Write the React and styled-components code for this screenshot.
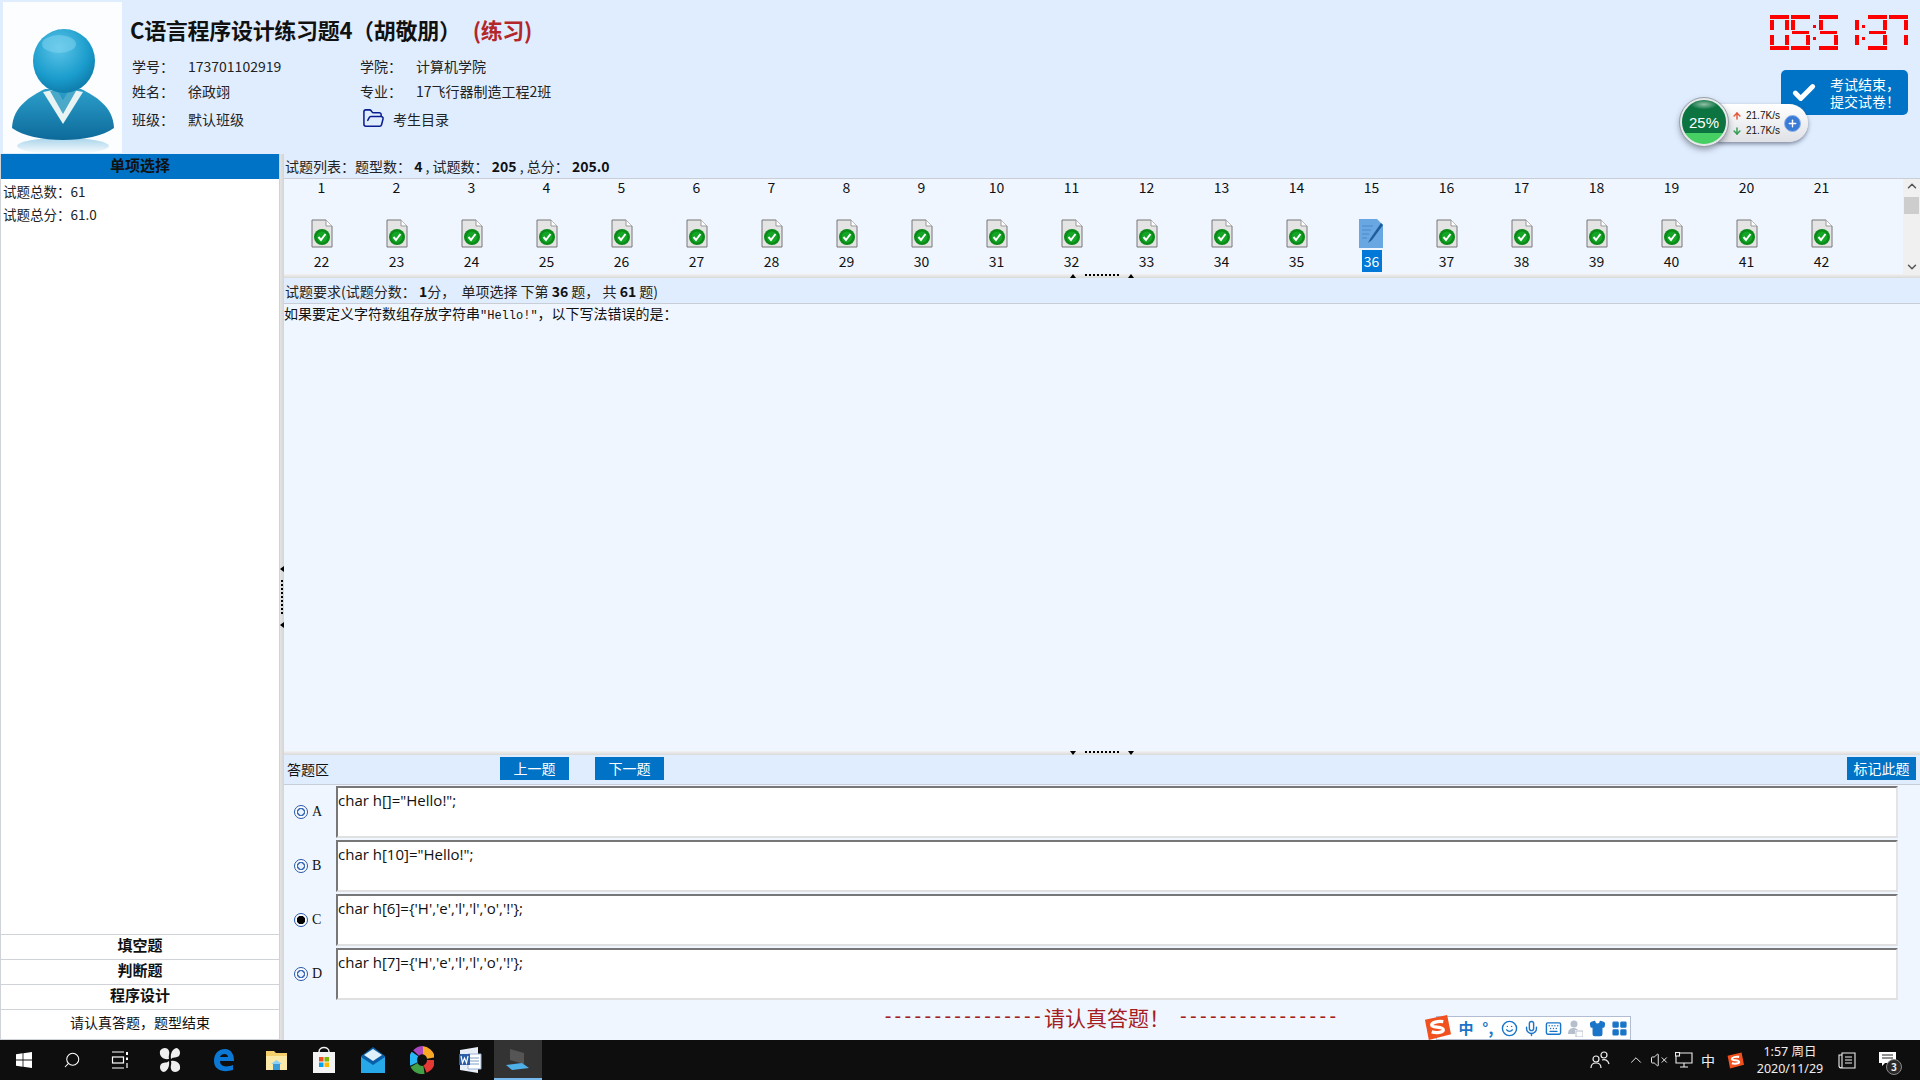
import React from "react";
import styled, { createGlobalStyle } from "styled-components";
import {
  Check,
  ChevronDown,
  ChevronUp,
  FolderOpen,
  Search,
  Smile,
  Mic,
  Keyboard,
  Shirt,
  LayoutGrid,
  VolumeX,
  Plus,
  ArrowUp,
  ArrowDown,
} from "lucide-react";

const CJK = `"Noto Sans CJK SC", "Noto Sans", sans-serif`;

const GlobalStyle = createGlobalStyle`
  html, body {
    margin: 0;
    padding: 0;
    width: 1920px;
    height: 1080px;
    overflow: hidden;
    font-family: ${CJK};
    font-size: 14px;
    color: #111;
  }
  * { box-sizing: border-box; }
`;

const Page = styled.div`
  position: relative;
  width: 1920px;
  height: 1080px;
  display: grid;
  grid-template-rows: 154px 886px 40px;
  background: #e0edff;
`;

/* header */
const Header = styled.header`
  display: flex;
  background: #e0edff;
`;

const AvatarBox = styled.div`
  width: 119px;
  height: 151px;
  margin: 2px 0 0 3px;
  background: #fbfdff;
`;

const Info = styled.div`
  margin-left: 8px;
  padding-top: 12px;
  flex: 1;
`;

const Title = styled.h1`
  margin: 0;
  height: 34px;
  font-size: 22px;
  line-height: 34px;
  font-weight: 700;
  letter-spacing: -0.3px;
  color: #111;
  span {
    margin-left: 12px;
    color: #b3262a;
  }
`;

const Facts = styled.div`
  display: grid;
  grid-template-columns: 56px 172px 56px 1fr;
  grid-template-rows: 25px 25px 31px;
  margin: 7px 0 0 2px;
  align-items: center;
  line-height: 20px;
  color: #222;
`;

const DirLink = styled.div`
  grid-column: 3 / 5;
  display: flex;
  align-items: center;
  gap: 8px;
  margin-left: 2px;
  svg { color: #0a1f8f; }
`;

const HeaderRight = styled.div`
  width: 150px;
  padding: 15px 12px 0 0;
  display: flex;
  flex-direction: column;
  align-items: flex-end;
`;

const Clock = styled.div`
  display: flex;
  height: 35px;
`;

const Digit = styled.div`
  width: 19px;
  height: 35px;
  display: grid;
  grid-template-columns: 4px 1fr 4px;
  grid-template-rows: 4px 1fr 3px 1fr 4px;
  margin-left: ${(p) => (p.$tight ? 0 : 2)}px;
`;

const Segment = styled.i`
  background: #ff0000;
  grid-area: ${(p) => p.$area};
  margin: ${(p) => p.$inset || 0};
`;

const ClockColon = styled.div`
  width: 9px;
  display: flex;
  flex-direction: column;
  align-items: center;
  justify-content: center;
  gap: 9px;
  i {
    width: 3px;
    height: 3px;
    background: #ff0000;
  }
`;

const SubmitButton = styled.button`
  width: 127px;
  height: 45px;
  margin-top: 20px;
  border: 0;
  border-radius: 5px;
  background: #0073c6;
  color: #fff;
  display: flex;
  align-items: center;
  padding: 0 0 0 10px;
  font-family: ${CJK};
  font-size: 14px;
  line-height: 17px;
  text-align: left;
  svg { flex: none; }
  span { margin-left: 13px; }
`;

/* floating net speed widget */
const NetWidget = styled.div`
  position: absolute;
  left: 1680px;
  top: 98px;
  width: 128px;
  height: 48px;
  z-index: 3;
`;

const NetPill = styled.div`
  position: absolute;
  left: 24px;
  top: 6px;
  width: 104px;
  height: 38px;
  border-radius: 19px;
  background: linear-gradient(#ffffff, #dfe1e6);
  box-shadow: 0 2px 4px rgba(60, 70, 90, 0.6);
  display: flex;
  align-items: center;
  padding-left: 28px;
`;

const NetRates = styled.div`
  display: grid;
  grid-template-columns: 14px auto;
  row-gap: 2px;
  align-items: center;
  font-family: "Liberation Sans", sans-serif;
  font-size: 10px;
  line-height: 13px;
  color: #111;
`;

const NetPlus = styled.div`
  width: 17px;
  height: 17px;
  margin-left: 4px;
  border-radius: 50%;
  background: #3a7bd5;
  border: 1px solid #8fb4e8;
  color: #fff;
  display: flex;
  align-items: center;
  justify-content: center;
`;

const NetBall = styled.div`
  position: absolute;
  left: 0;
  top: 0;
  width: 48px;
  height: 48px;
  border-radius: 50%;
  border: 2px solid #e6e8ea;
  outline: 1px solid #9aa3a8;
  background: radial-gradient(ellipse 14px 5px at 50% 10%, rgba(255, 255, 255, 0.55), transparent),
    linear-gradient(#0b7440 0 75%, #46cf62 75%);
  box-shadow: 0 3px 6px rgba(40, 50, 60, 0.5);
  color: #fff;
  font-family: "Liberation Sans", sans-serif;
  font-size: 15px;
  display: flex;
  align-items: center;
  justify-content: center;
`;

/* body */
const Body = styled.div`
  display: flex;
  min-height: 0;
`;

const LeftPanel = styled.aside`
  width: 280px;
  display: flex;
  flex-direction: column;
  background: #fff;
  border: 1px solid #cfd3d8;
  border-top: 0;
`;

const LeftHead = styled.div`
  height: 25px;
  background: #0073c6;
  text-align: center;
  font-weight: 700;
  font-size: 15px;
  line-height: 21px;
  color: #111;
`;

const LeftStats = styled.div`
  flex: 1;
  padding: 1px 0 0 2px;
  font-size: 13.5px;
  line-height: 23px;
  color: #222;
`;

const LeftRow = styled.div`
  height: ${(p) => (p.$end ? 30 : 25)}px;
  border-top: 1px solid #cfd3d8;
  text-align: center;
  font-weight: ${(p) => (p.$end ? 400 : 700)};
  line-height: ${(p) => (p.$end ? 25 : 19)}px;
  font-size: ${(p) => (p.$end ? 14 : 15)}px;
`;

const Splitter = styled.div`
  flex: none;
  display: flex;
  align-items: center;
  justify-content: center;
  background: ${(p) =>
    p.$vertical
      ? "linear-gradient(90deg, #e4e4e4, #d4d4d4)"
      : "linear-gradient(#f2f2f2, #d9d9d9)"};
  width: ${(p) => (p.$vertical ? "4px" : "auto")};
  height: ${(p) => (p.$vertical ? "auto" : "4px")};
  flex-direction: ${(p) => (p.$vertical ? "column" : "row")};
  gap: ${(p) => (p.$vertical ? 8 : 9)}px;
`;

const SplitDots = styled.i`
  width: ${(p) => (p.$vertical ? 0 : 34)}px;
  height: ${(p) => (p.$vertical ? 34 : 0)}px;
  border-left: ${(p) => (p.$vertical ? "2px dotted #000" : 0)};
  border-top: ${(p) => (p.$vertical ? 0 : "2px dotted #000")};
  margin-top: ${(p) => (p.$vertical ? 0 : -2)}px;
`;

const SplitArrow = styled.i`
  width: 0;
  height: 0;
  border: 3px solid transparent;
  ${(p) =>
    p.$dir === "up"
      ? "border-bottom: 4px solid #000; border-top: 0;"
      : p.$dir === "down"
      ? "border-top: 4px solid #000; border-bottom: 0;"
      : "border-right: 4px solid #000; border-left: 0;"}
`;

const RightPanel = styled.main`
  flex: 1;
  min-width: 0;
  display: flex;
  flex-direction: column;
  background: #eff6ff;
`;

const BarRow = styled.div`
  height: ${(p) => p.$h}px;
  flex: none;
  background: #e0edff;
  border-bottom: 1px solid #c9ced6;
  display: flex;
  align-items: center;
  padding-left: 1px;
  font-size: 14px;
  color: #222;
  white-space: pre;
  b { color: #111; font-weight: 700; }
`;

const QuestionGrid = styled.div`
  height: 95px;
  flex: none;
  display: flex;
  justify-content: space-between;
  background: #eff6ff;
`;

const Cells = styled.div`
  display: grid;
  grid-template-columns: repeat(21, 75px);
  grid-template-rows: 15px 25px 29px 26px;
  justify-items: center;
  align-items: center;
`;

const CellNumber = styled.div`
  min-width: 20px;
  height: 22px;
  line-height: 22px;
  text-align: center;
  font-size: 14px;
  background: ${(p) => (p.$on ? "#0078d7" : "transparent")};
  color: ${(p) => (p.$on ? "#fff" : "#111")};
`;

const CellIcon = styled.div`
  grid-row: 3;
  height: 29px;
`;

const Spacer = styled.div`
  grid-column: 1 / -1;
`;

const ScrollBar = styled.div`
  width: 17px;
  background: #f0f0f0;
  display: flex;
  flex-direction: column;
  align-items: center;
  color: #555;
`;

const ScrollThumb = styled.div`
  width: 15px;
  height: 17px;
  margin-top: 4px;
  margin-bottom: auto;
  background: #cdcdcd;
`;

const QuestionText = styled.div`
  flex: 1;
  line-height: 18px;
  font-size: 14px;
  color: #111;
  span { font-family: "Liberation Mono", monospace; font-size: 12px; }
`;

const AnswerBar = styled.div`
  height: 30px;
  flex: none;
  background: #e0edff;
  border-bottom: 1px solid #c9ced6;
  display: flex;
  align-items: center;
  padding: 0 4px 2px 3px;
  font-size: 14px;
`;

const BlueButton = styled.button`
  width: 69px;
  height: 23px;
  margin-left: ${(p) => p.$ml};
  border: 0;
  padding: 0;
  background: #0073c6;
  color: #fff;
  font-family: ${CJK};
  font-size: 14px;
  line-height: 23px;
`;

const Options = styled.div`
  display: flex;
  flex-direction: column;
  gap: 2px;
  padding: 1px 22px 0 0;
`;

const OptionRow = styled.label`
  display: flex;
  height: 52px;
`;

const OptionPick = styled.div`
  width: 52px;
  flex: none;
  display: flex;
  align-items: center;
  padding: 0 0 0 10px;
  gap: 4px;
  font-family: "Liberation Serif", serif;
  font-size: 14px;
`;

const Radio = styled.i`
  width: 14px;
  height: 14px;
  border-radius: 50%;
  border: 1px solid #2456a8;
  background: ${(p) =>
    p.$checked
      ? "radial-gradient(circle, #000 0 4px, #fff 4.5px)"
      : "radial-gradient(circle, #eaf2ff 0 2.5px, #3b6cb8 3px 4px, #fff 4.5px)"};
`;

const OptionBox = styled.div`
  flex: 1;
  background: #fff;
  border-style: solid;
  border-width: 2px;
  border-color: #777 #e4e4e4 #e0e0e0 #777;
  padding: 0;
  font-family: "Open Sans", sans-serif;
  font-size: 15px;
  line-height: 24px;
  color: #111;
`;

const Notice = styled.div`
  height: 40px;
  flex: none;
  display: flex;
  align-items: center;
  justify-content: center;
  padding: 0 0 7px 20px;
  color: #a51d22;
  font-size: 21px;
`;

const Dashes = styled.span`
  font-family: "Liberation Sans", sans-serif;
  font-size: 20px;
  letter-spacing: 3.3px;
  margin-left: ${(p) => p.$ml || 0}px;
`;

/* ime bar */
const ImeBar = styled.div`
  position: absolute;
  left: 1436px;
  top: 1016px;
  width: 195px;
  height: 24px;
  background: #fff;
  border: 1px solid #b2bdd1;
  display: flex;
  align-items: center;
  padding-left: 18px;
  color: #1a74c8;
  z-index: 4;
`;

const ImeSlot = styled.span`
  width: 22px;
  display: flex;
  justify-content: center;
  font-size: 15px;
  font-weight: 700;
  line-height: 20px;
`;

const ImeLogo = styled.div`
  position: absolute;
  left: 1424px;
  top: 1014px;
  z-index: 5;
`;

/* taskbar */
const Taskbar = styled.footer`
  background: #0e0e0e;
  display: flex;
  align-items: center;
  color: #fff;
`;

const TaskSlot = styled.div`
  width: ${(p) => p.$w || 48}px;
  height: 40px;
  flex: none;
  display: flex;
  align-items: center;
  justify-content: center;
  ${(p) => p.$active && "background: #333; border-bottom: 2px solid #76b9ed;"}
`;

const Tray = styled.div`
  margin-left: auto;
  padding-right: 10px;
  display: flex;
  align-items: center;
  height: 40px;
`;

const TraySlot = styled.div`
  width: ${(p) => p.$w}px;
  height: 40px;
  flex: none;
  display: flex;
  align-items: center;
  justify-content: center;
  margin-left: ${(p) => p.$ml || 0}px;
  font-size: 14px;
  color: #eee;
`;

const TrayClock = styled.div`
  width: 80px;
  text-align: center;
  font-family: "Noto Sans", ${CJK};
  font-size: 12.5px;
  line-height: 17px;
  color: #eee;
`;

const TrayBadge = styled.i`
  position: absolute;
  right: 8px;
  bottom: 5px;
  width: 16px;
  height: 16px;
  border-radius: 50%;
  background: #2a2a2a;
  border: 1px solid #888;
  font-style: normal;
  font-size: 10px;
  line-height: 14px;
  text-align: center;
  font-weight: 700;
`;

const TrayMsg = styled(TraySlot)`
  position: relative;
`;

const SEGMENTS = {
  0: "abcdef",
  1: "bc",
  3: "abcdg",
  5: "acdfg",
  7: "abc",
};

const SEG_AREA = {
  a: "1 / 1 / 2 / 4",
  b: "2 / 3 / 3 / 4",
  c: "4 / 3 / 5 / 4",
  d: "5 / 1 / 6 / 4",
  e: "4 / 1 / 5 / 2",
  f: "2 / 1 / 3 / 2",
  g: "3 / 1 / 4 / 4",
};

const LedDigit = ({ value, tight }) => (
  <Digit $tight={tight}>
    {SEGMENTS[value].split("").map((s) => (
      <Segment
        key={s}
        $area={SEG_AREA[s]}
        $inset={"bcef".includes(s) ? "1px 0" : s === "g" ? "0 1px" : 0}
      />
    ))}
  </Digit>
);

const Colon = () => (
  <ClockColon>
    <i />
    <i />
  </ClockColon>
);

const Avatar = () => (
  <svg width="119" height="151" viewBox="0 0 119 151">
    <defs>
      <radialGradient id="head" cx="0.42" cy="0.3" r="0.8">
        <stop offset="0" stopColor="#5cc4e8" />
        <stop offset="0.6" stopColor="#1a9ccc" />
        <stop offset="1" stopColor="#0a6f9e" />
      </radialGradient>
      <linearGradient id="torso" x1="0" y1="0" x2="0" y2="1">
        <stop offset="0" stopColor="#2c9fcb" />
        <stop offset="1" stopColor="#0d6a9a" />
      </linearGradient>
      <linearGradient id="glow" x1="0" y1="0" x2="0" y2="1">
        <stop offset="0" stopColor="#a8d4ea" />
        <stop offset="1" stopColor="#fbfdff" />
      </linearGradient>
    </defs>
    <ellipse cx="60" cy="144" rx="46" ry="8" fill="url(#glow)" />
    <path d="M9 126C10 104 28 94 42 87L78 87C92 94 110 104 111 126C90 142 30 142 9 126Z" fill="url(#torso)" />
    <path d="M40 90L60 122L80 90L70 88L60 104L50 88Z" fill="#e8f3f4" />
    <path d="M47 89L60 112L73 89L66 88L60 98L54 88Z" fill="#4aa8c8" />
    <ellipse cx="61" cy="59" rx="31" ry="32" fill="url(#head)" />
    <ellipse cx="56" cy="42" rx="17" ry="9" fill="#7fd4ee" opacity="0.55" />
  </svg>
);

const DoneFile = () => (
  <svg width="22" height="29" viewBox="0 0 22 29">
    <path d="M1 1H15L21 7V28H1Z" fill="#e4e4e4" stroke="#777" />
    <path d="M15 1V7H21" fill="#fff" stroke="#999" />
    <circle cx="11" cy="18" r="8" fill="#0b8a18" />
    <circle cx="11" cy="18" r="5.5" fill="#12a526" />
    <path d="M7.5 18L10 21L14.5 15" fill="none" stroke="#fff" strokeWidth="2" />
  </svg>
);

const EditFile = () => (
  <svg width="25" height="30" viewBox="0 0 25 30">
    <path d="M0 0H18L24 6V29H0Z" fill="#69a7e2" />
    <path d="M3 7H14M3 11H12M3 15H10M3 19H8" stroke="#4a89c6" />
    <path d="M22 4L11 20L9 24L13 21L24 6Z" fill="#1d5d9e" />
  </svg>
);

const WinLogo = () => (
  <svg width="16" height="16" viewBox="0 0 16 16" fill="#fff">
    <path d="M0 2.2L6.6 1.3V7.6H0ZM7.4 1.2L16 0V7.6H7.4ZM0 8.4H6.6V14.7L0 13.8ZM7.4 8.4H16V16L7.4 14.8Z" />
  </svg>
);

const TaskView = () => (
  <svg width="18" height="18" viewBox="0 0 18 18" fill="none" stroke="#fff" strokeWidth="1.2">
    <path d="M1 1H13M1 17H13" />
    <rect x="1.5" y="6" width="11" height="6" />
    <path d="M16 1V4M16 6.5V9" strokeWidth="2" />
    <path d="M16 12V17" />
  </svg>
);

const Pinwheel = () => (
  <svg width="22" height="26" viewBox="0 0 22 26" fill="#eee">
    <path d="M10 12C4 13 0 9 1 4C3 0 9 0 10 4C11 7 9 9 10 12Z" />
    <path d="M12 12C11 6 14 1 18 1C22 3 22 9 18 10C15 11 14 10 12 12Z" />
    <path d="M12 14C18 13 22 17 21 22C19 26 13 26 12 22C11 19 13 17 12 14Z" />
    <path d="M10 14C11 20 8 25 4 25C0 23 0 17 4 16C7 15 8 16 10 14Z" />
  </svg>
);

const EdgeIcon = () => (
  <svg width="22" height="24" viewBox="0 0 22 24">
    <path d="M1 13C1 5 6 1 12 1C18 1 21 6 21 13H7C7 18 12 20 20 17V22C10 25 1 22 1 13ZM7 9H15C15 5 8 5 7 9Z" fill="#0b78d6" />
  </svg>
);

const FolderIcon = () => (
  <svg width="23" height="23" viewBox="0 0 23 23">
    <path d="M1 2H9L11 4H22V21H1Z" fill="#f4d06c" />
    <path d="M1 7H22V21H1Z" fill="#fbe9a8" />
    <path d="M8 15H15V21H8Z" fill="#3a9bdc" />
    <path d="M6 15L11.5 11L17 15Z" fill="#8ed0f5" />
  </svg>
);

const StoreIcon = () => (
  <svg width="24" height="28" viewBox="0 0 24 28">
    <path d="M7 6C7 0 17 0 17 6" fill="none" stroke="#eee" strokeWidth="1.5" />
    <rect x="1" y="6" width="22" height="21" fill="#f3f3f3" />
    <rect x="7" y="11" width="4.5" height="4.5" fill="#f25022" />
    <rect x="12.5" y="11" width="4.5" height="4.5" fill="#7fba00" />
    <rect x="7" y="16.5" width="4.5" height="4.5" fill="#00a4ef" />
    <rect x="12.5" y="16.5" width="4.5" height="4.5" fill="#ffb900" />
  </svg>
);

const MailIcon = () => (
  <svg width="24" height="26" viewBox="0 0 24 26">
    <path d="M0 9L12 0L24 9V26H0Z" fill="#0a5fa8" />
    <path d="M0 10L12 18L24 10V26H0Z" fill="#27a8e8" />
    <path d="M3 8L12 2L21 8L12 14Z" fill="#dff1fb" />
  </svg>
);

const ColorWheel = () => (
  <svg width="24" height="28" viewBox="0 0 24 28" fill="none" strokeWidth="8">
    <path d="M12 4A10 10 0 0 1 21 12" stroke="#f9a825" />
    <path d="M21 14A10 10 0 0 1 15 23" stroke="#e53935" />
    <path d="M14 24A10 10 0 0 1 4 19" stroke="#43a047" />
    <path d="M4 18A10 10 0 0 1 5 8" stroke="#29b6f6" />
    <path d="M6 7A10 10 0 0 1 13 4" stroke="#ab47bc" />
  </svg>
);

const WordIcon = () => (
  <svg width="24" height="26" viewBox="0 0 24 26">
    <path d="M2 3L20 0V26L2 23Z" fill="#e8eef7" />
    <path d="M10 7H23V22H10Z" fill="#fff" stroke="#9bb3d4" />
    <path d="M12 11H21M12 14H21M12 17H21" stroke="#7d9cc6" />
    <rect x="1" y="7" width="11" height="11" fill="#2a5ea8" />
    <path d="M3 9L4.5 16L6.5 11L8.5 16L10 9" fill="none" stroke="#fff" strokeWidth="1.2" />
  </svg>
);

const ExamIcon = () => (
  <svg width="24" height="24" viewBox="0 0 24 24">
    <path d="M4 2L18 6V17L4 13Z" fill="#555" />
    <path d="M0 18L16 16L23 21L6 23Z" fill="#4fb0e8" />
  </svg>
);

const SogouMark = ({ size }) => (
  <svg width={size} height={size} viewBox="0 0 28 28">
    <path d="M1 6L24 1L28 21L5 27Z" fill="#f0511e" />
    <path d="M20 8C14 7 8 9 8 11.5C8 15 20 12 20 16.5C20 19 13 20 8 18.5" fill="none" stroke="#fff" strokeWidth="3.4" />
  </svg>
);

const PeopleIcon = () => (
  <svg width="20" height="18" viewBox="0 0 20 18" fill="none" stroke="#eee" strokeWidth="1.2">
    <circle cx="6" cy="8" r="3" />
    <path d="M1 17C1 13 3 12 6 12C9 12 11 13 11 17" />
    <circle cx="14" cy="4" r="3" />
    <path d="M12 9C15 8 18 9 19 13" />
  </svg>
);

const NetIcon = () => (
  <svg width="18" height="16" viewBox="0 0 18 16" fill="none" stroke="#eee" strokeWidth="1.1">
    <path d="M4 1H17V11H1V4" />
    <rect x="0.5" y="0.5" width="4" height="3.5" />
    <path d="M9 11V15M5 15H13" />
  </svg>
);

const NotesIcon = () => (
  <svg width="18" height="17" viewBox="0 0 18 17" fill="none" stroke="#eee" strokeWidth="1.1">
    <path d="M4 1H17V16H4ZM4 3H1V14C1 15.5 2.5 16 4 16" />
    <path d="M7 5H14M7 8H14M7 11H14" />
  </svg>
);

const MsgIcon = () => (
  <svg width="18" height="16" viewBox="0 0 18 16" fill="#fff">
    <path d="M0 0H17V11H6L3 14V11H0Z" />
    <path d="M3 3H14M3 6H14" stroke="#222" />
  </svg>
);

const PersonCard = () => (
  <svg width="16" height="17" viewBox="0 0 16 17" fill="#b6c0cc">
    <circle cx="7" cy="4" r="3.5" />
    <path d="M1 14C1 9 4 8 7 8C9 8 10 9 11 10H8V14Z" />
    <rect x="9" y="11" width="7" height="6" fill="#fff" stroke="#b6c0cc" />
  </svg>
);

const range = (from, to) =>
  Array.from({ length: to - from + 1 }, (_, i) => from + i);

const OPTIONS = [
  { key: "A", code: 'char h[]="Hello!";' },
  { key: "B", code: 'char h[10]="Hello!";' },
  { key: "C", code: "char h[6]={'H','e','l','l','o','!'};", checked: true },
  { key: "D", code: "char h[7]={'H','e','l','l','o','!'};" },
];

const App = () => {
  return (
    <Page>
      <GlobalStyle />
      <Header>
        <AvatarBox>
          <Avatar />
        </AvatarBox>
        <Info>
          <Title>
            C语言程序设计练习题4（胡敬朋）<span>(练习)</span>
          </Title>
          <Facts>
            <div>学号：</div>
            <div>173701102919</div>
            <div>学院：</div>
            <div>计算机学院</div>
            <div>姓名：</div>
            <div>徐政翊</div>
            <div>专业：</div>
            <div>17飞行器制造工程2班</div>
            <div>班级：</div>
            <div>默认班级</div>
            <DirLink>
              <FolderOpen size={23} strokeWidth={1.6} />
              考生目录
            </DirLink>
          </Facts>
        </Info>
        <HeaderRight>
          <Clock role="timer" aria-label="05:51:37">
            <LedDigit value={0} tight />
            <LedDigit value={5} />
            <Colon />
            <LedDigit value={5} tight />
            <LedDigit value={1} />
            <Colon />
            <LedDigit value={3} tight />
            <LedDigit value={7} />
          </Clock>
          <SubmitButton>
            <Check size={26} strokeWidth={4.5} />
            <span>
              考试结束，
              <br />
              提交试卷！
            </span>
          </SubmitButton>
        </HeaderRight>
      </Header>

      <NetWidget>
        <NetPill>
          <NetRates>
            <ArrowUp size={10} color="#e4593c" strokeWidth={3.5} />
            <span>21.7K/s</span>
            <ArrowDown size={10} color="#2c9a4c" strokeWidth={3.5} />
            <span>21.7K/s</span>
          </NetRates>
          <NetPlus>
            <Plus size={11} strokeWidth={3} />
          </NetPlus>
        </NetPill>
        <NetBall>25%</NetBall>
      </NetWidget>

      <Body>
        <LeftPanel>
          <LeftHead>单项选择</LeftHead>
          <LeftStats>
            <div>试题总数：61</div>
            <div>试题总分：61.0</div>
          </LeftStats>
          <LeftRow>填空题</LeftRow>
          <LeftRow>判断题</LeftRow>
          <LeftRow>程序设计</LeftRow>
          <LeftRow $end>请认真答题，题型结束</LeftRow>
        </LeftPanel>

        <Splitter $vertical>
          <SplitArrow />
          <SplitDots $vertical />
          <SplitArrow />
        </Splitter>

        <RightPanel>
          <BarRow $h={25}>
            试题列表：题型数：<b> 4</b> , 试题数：<b> 205</b> , 总分：<b> 205.0</b>
          </BarRow>
          <QuestionGrid>
            <Cells>
              {range(1, 21).map((n) => (
                <CellNumber key={n}>{n}</CellNumber>
              ))}
              <Spacer />
              {range(22, 42).map((n) => (
                <CellIcon key={n}>{n === 36 ? <EditFile /> : <DoneFile />}</CellIcon>
              ))}
              {range(22, 42).map((n) => (
                <CellNumber key={n} $on={n === 36}>
                  {n}
                </CellNumber>
              ))}
            </Cells>
            <ScrollBar>
              <ChevronUp size={14} strokeWidth={2.5} />
              <ScrollThumb />
              <ChevronDown size={14} strokeWidth={2.5} />
            </ScrollBar>
          </QuestionGrid>
          <Splitter>
            <SplitArrow $dir="up" />
            <SplitDots />
            <SplitArrow $dir="up" />
          </Splitter>
          <BarRow $h={26}>
            试题要求(试题分数： <b>1</b>分，  单项选择 下第 <b>36</b> 题， 共 <b>61</b> 题)
          </BarRow>
          <QuestionText>
            如果要定义字符数组存放字符串<span>"Hello!"</span>，以下写法错误的是：
          </QuestionText>
          <Splitter>
            <SplitArrow $dir="down" />
            <SplitDots />
            <SplitArrow $dir="down" />
          </Splitter>
          <AnswerBar>
            答题区
            <BlueButton $ml="171px">上一题</BlueButton>
            <BlueButton $ml="26px">下一题</BlueButton>
            <BlueButton $ml="auto">标记此题</BlueButton>
          </AnswerBar>
          <Options>
            {OPTIONS.map((o) => (
              <OptionRow key={o.key}>
                <OptionPick>
                  <Radio $checked={o.checked} />
                  {o.key}
                </OptionPick>
                <OptionBox>{o.code}</OptionBox>
              </OptionRow>
            ))}
          </Options>
          <Notice>
            <Dashes>----------------</Dashes>
            请认真答题！
            <Dashes $ml={10}>----------------</Dashes>
          </Notice>
        </RightPanel>
      </Body>

      <ImeLogo>
        <SogouMark size={27} />
      </ImeLogo>
      <ImeBar>
        <ImeSlot>中</ImeSlot>
        <ImeSlot>°,</ImeSlot>
        <ImeSlot>
          <Smile size={17} />
        </ImeSlot>
        <ImeSlot>
          <Mic size={17} />
        </ImeSlot>
        <ImeSlot>
          <Keyboard size={17} />
        </ImeSlot>
        <ImeSlot>
          <PersonCard />
        </ImeSlot>
        <ImeSlot>
          <Shirt size={17} fill="#1a74c8" />
        </ImeSlot>
        <ImeSlot>
          <LayoutGrid size={17} fill="#1a74c8" />
        </ImeSlot>
      </ImeBar>

      <Taskbar>
        <TaskSlot>
          <WinLogo />
        </TaskSlot>
        <TaskSlot>
          <Search size={18} strokeWidth={1.4} style={{ transform: "scaleX(-1)" }} />
        </TaskSlot>
        <TaskSlot>
          <TaskView />
        </TaskSlot>
        <TaskSlot $w={52}>
          <Pinwheel />
        </TaskSlot>
        <TaskSlot $w={56}>
          <EdgeIcon />
        </TaskSlot>
        <TaskSlot>
          <FolderIcon />
        </TaskSlot>
        <TaskSlot>
          <StoreIcon />
        </TaskSlot>
        <TaskSlot $w={50}>
          <MailIcon />
        </TaskSlot>
        <TaskSlot>
          <ColorWheel />
        </TaskSlot>
        <TaskSlot>
          <WordIcon />
        </TaskSlot>
        <TaskSlot $active>
          <ExamIcon />
        </TaskSlot>
        <Tray>
          <TraySlot $w={30}>
            <PeopleIcon />
          </TraySlot>
          <TraySlot $w={20} $ml={11}>
            <ChevronUp size={18} strokeWidth={1.3} />
          </TraySlot>
          <TraySlot $w={26}>
            <VolumeX size={18} strokeWidth={1.3} />
          </TraySlot>
          <TraySlot $w={24}>
            <NetIcon />
          </TraySlot>
          <TraySlot $w={24}>中</TraySlot>
          <TraySlot $w={30}>
            <SogouMark size={17} />
          </TraySlot>
          <TrayClock>
            1:57 周日
            <br />
            2020/11/29
          </TrayClock>
          <TraySlot $w={34}>
            <NotesIcon />
          </TraySlot>
          <TrayMsg $w={44} $ml={2}>
            <MsgIcon />
            <TrayBadge>3</TrayBadge>
          </TrayMsg>
        </Tray>
      </Taskbar>
    </Page>
  );
};

export default App;
